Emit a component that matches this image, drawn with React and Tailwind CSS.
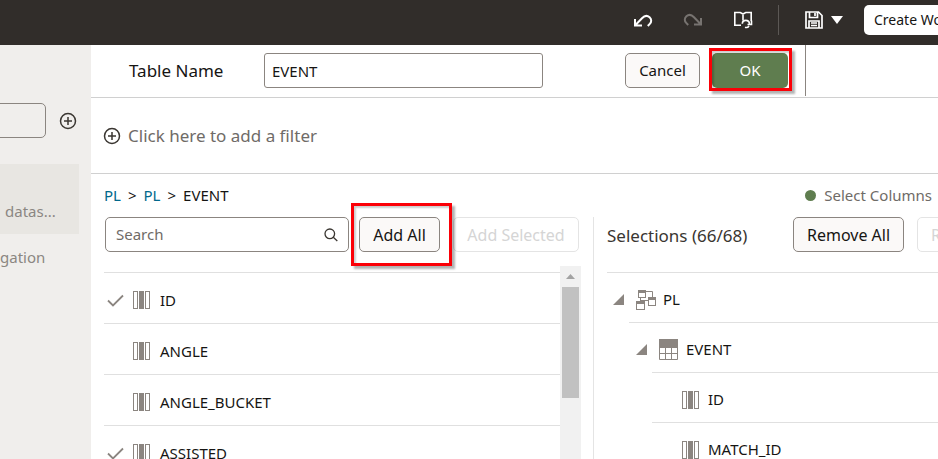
import React from "react";

function PlusCircle() {
  return (
    <svg width="18" height="18" viewBox="0 0 18 18" fill="none" stroke="#3a3631" strokeWidth="1.5" aria-hidden="true">
      <circle cx="9" cy="9" r="7.5" />
      <path d="M9 5v8M5 9h8" />
    </svg>
  );
}

function Undo() {
  return (
    <svg width="20" height="20" viewBox="0 0 20 20" fill="none" stroke="currentColor" strokeWidth="2" aria-hidden="true">
      <path d="M2 9v6.500h7M2.500 15L9 8.200c2.500-2.600 5.500-2.700 7.600-.9 2.200 2 2 4.700.2 6.600L14.800 16" />
    </svg>
  );
}

function Redo() {
  return (
    <svg width="20" height="20" viewBox="0 0 20 20" fill="none" stroke="currentColor" strokeWidth="2" aria-hidden="true">
      <path d="M18 8v6.500h-7M17.500 14L11 7.200C8.500 4.600 5.500 4.500 3.400 6.300c-2.200 2-2 4.700-.2 6.600L5.200 15" />
    </svg>
  );
}

function BookRefresh() {
  return (
    <svg width="20" height="20" viewBox="0 0 20 20" fill="none" stroke="white" strokeWidth="1.600" aria-hidden="true">
      <path d="M8 15.200H1.800V2.500h5.500L10 4l2.700-1.500h5.500V11M10 4v6.500" />
      <path d="M9.300 13.800c.2-4.500 6.700-4.600 7.200 0M18.500 10.500v4h-4M16 16c-1 1.500-2.500 1.800-4 1.300" />
    </svg>
  );
}

function Floppy() {
  return (
    <svg width="20" height="20" viewBox="0 0 20 20" fill="none" stroke="white" strokeWidth="1.700" aria-hidden="true">
      <path d="M2 2h12.500L18 5.500V18H2zM5.500 2v5.500h8V2M5 18v-7h10v7M7 13h6M7 15.500h6" />
      <path d="M11 3v3" />
    </svg>
  );
}

function Column() {
  return (
    <svg className="shrink-0" width="19" height="18" viewBox="0 0 19 18" fill="none" stroke="#8b8580" aria-hidden="true">
      <rect x="1.500" y=".5" width="4" height="17" />
      <rect x="7" y="0" width="5" height="18" fill="#8b8580" stroke="none" />
      <rect x="13.500" y=".5" width="4" height="17" />
    </svg>
  );
}

function Check() {
  return (
    <svg width="17" height="13" viewBox="0 0 17 13" fill="none" stroke="#8b8580" strokeWidth="1.800" aria-label="Added">
      <path d="M1 6.500l5 5L16 1.500" />
    </svg>
  );
}

function Schema() {
  return (
    <svg width="21" height="21" viewBox="0 0 21 21" fill="none" stroke="#8b8580" aria-hidden="true">
      <path d="M10 2.500h6.500v6M4.500 8v4M4.500 11.500h8" />
      <rect x="2.500" y="1.500" width="7" height="7" fill="white" />
      <rect x="2" y="1" width="8" height="3" fill="#8b8580" stroke="none" />
      <rect x="12.500" y="8.500" width="7" height="8" fill="white" />
      <rect x="12" y="8" width="8" height="3" fill="#8b8580" stroke="none" />
      <rect x=".5" y="12.500" width="8" height="8" fill="white" />
      <rect x="0" y="12" width="9" height="3" fill="#8b8580" stroke="none" />
    </svg>
  );
}

function TableIcon() {
  return (
    <svg width="19" height="21" viewBox="0 0 19 21" fill="none" stroke="#8b8580" aria-hidden="true">
      <rect x="0" y="0" width="19" height="9" fill="#8b8580" stroke="none" />
      <path d="M.5 8v12.500h18V8M6.500 8v12.500M12.500 8v12.500M0 14.500h19" />
    </svg>
  );
}

function Expander({ name }) {
  return (
    <button type="button" aria-label={"Collapse " + name} className="shrink-0">
      <svg width="12" height="11" viewBox="0 0 12 11" fill="#8b8580" aria-hidden="true">
        <path d="M11 0v11H0z" />
      </svg>
    </button>
  );
}

function Highlight({ className }) {
  return (
    <span
      aria-hidden="true"
      className={"pointer-events-none absolute border-3 border-[#fb0007] shadow-[3px_3px_2px_rgba(0,0,0,0.3),inset_2px_2px_2px_rgba(0,0,0,0.2)] " + className}
    />
  );
}

const columns = [
  { name: "ID", added: true },
  { name: "ANGLE", added: false },
  { name: "ANGLE_BUCKET", added: false },
  { name: "ASSISTED", added: true },
];

const outline = "h-[35px] shrink-0 rounded-[5px] border border-[#8b8580] bg-[#fbf9f8] text-[#161513]";
const disabled = "h-[35px] shrink-0 rounded-[5px] border border-[#e4e4e4] text-[#d5d5d5]";

export default function App() {
  return (
    <div className="flex h-screen flex-col overflow-hidden bg-white font-['Noto_Sans','Open_Sans',sans-serif] text-[15px] text-[#161513]">
      <header className="flex h-[45px] shrink-0 items-center justify-end bg-[#312d2a] pb-[5px] text-white">
        <div className="flex items-center gap-[30px]">
          <button type="button" aria-label="Undo"><Undo /></button>
          <button type="button" aria-label="Redo" className="text-[#777370]"><Redo /></button>
          <button type="button" aria-label="Refresh data"><BookRefresh /></button>
        </div>
        <span className="ml-[25px] h-[30px] w-px bg-[#5c5855]" />
        <button type="button" aria-label="Save" className="ml-[25px] flex items-center gap-[7px]">
          <Floppy />
          <svg width="12" height="8" viewBox="0 0 12 8" fill="white" aria-hidden="true"><path d="M0 0h12L6 8z" /></svg>
        </button>
        <button type="button" className="-mr-[70px] ml-[21px] h-[30px] w-36 shrink-0 rounded-[5px] bg-white pl-[10px] text-left text-sm whitespace-nowrap text-[#161513]">
          Create Workbook
        </button>
      </header>

      <div className="flex min-h-0 flex-1">
        <aside className="w-[91px] shrink-0 bg-[#f0eeec] pt-[58px] text-[#8b8782]">
          <div className="flex items-center gap-[13px]">
            <input aria-label="Search datasets" className="-ml-2 h-[35px] w-[54px] rounded-[5px] border border-[#8b8580] bg-transparent px-2" />
            <button type="button" aria-label="Add"><PlusCircle /></button>
          </div>
          <ul className="mt-[26px]">
            <li className="mr-3 flex h-[70px] items-end bg-[#e8e6e2] pb-3 pl-[5px]">datas...</li>
            <li className="flex h-[46px] items-center">gation</li>
          </ul>
        </aside>

        <main className="flex min-w-0 flex-1 flex-col">
          <div className="flex h-[53px] shrink-0 items-center border-b border-[#d0d0d0] pb-px pl-[38px]">
            <label htmlFor="table-name" className="w-[135px] shrink-0 text-[17px]">Table Name</label>
            <input id="table-name" defaultValue="EVENT" className="h-[35px] w-[279px] rounded-[3px] border border-[#8b8580] px-[7px]" />
            <div className="ml-[82px] flex h-full items-center gap-3 border-r border-[#8b8580] pr-[17px]">
              <button type="button" className={outline + " w-[75px]"}>Cancel</button>
              <div className="relative">
                <button type="button" className="block h-[35px] w-[76px] rounded-[5px] bg-[#5f7d4f] text-white">OK</button>
                <Highlight className="-top-[5px] -right-1 -bottom-[3px] -left-[3px]" />
              </div>
            </div>
          </div>

          <div className="flex h-[76px] shrink-0 items-center border-b border-[#d0d0d0] pl-3">
            <button type="button" className="flex items-center gap-[7px] text-[17px] text-[#6f6b67]">
              <PlusCircle />
              Click here to add a filter
            </button>
          </div>

          <div className="flex h-[43px] shrink-0 items-center justify-between pr-[6px] pl-[13px]">
            <nav aria-label="Breadcrumb" className="flex gap-[7px]">
              <a href="#root" className="text-[#00688c]">PL</a>
              <span>&gt;</span>
              <a href="#schema" className="text-[#00688c]">PL</a>
              <span>&gt;</span>
              <span>EVENT</span>
            </nav>
            <div className="flex items-center gap-2 text-[#6f6b67]">
              <span className="size-[11px] rounded-full bg-[#5f7d4f]" />
              Select Columns
            </div>
          </div>

          <div className="flex min-h-0 flex-1">
            <section className="flex w-[502px] shrink-0 flex-col pl-[13px]">
              <div className="flex h-[49px] shrink-0 pl-px text-base">
                <div className="flex h-[35px] w-[244px] items-center rounded-[5px] border border-[#8b8580] pr-[10px] pl-[10px]">
                  <input aria-label="Search" placeholder="Search" className="min-w-0 flex-1 text-[15px] outline-none placeholder:text-[#6f6b67]" />
                  <svg width="14" height="14" viewBox="0 0 14 14" fill="none" stroke="#3a3631" strokeWidth="1.300" aria-hidden="true">
                    <circle cx="5.800" cy="5.800" r="4.800" />
                    <path d="M9.300 9.300L13.300 13" />
                  </svg>
                </div>
                <div className="relative ml-[10px]">
                  <button type="button" className={outline + " w-[81px]"}>Add All</button>
                </div>
                <div className="relative ml-[13px]">
                  <button type="button" disabled className={disabled + " w-[126px]"}>Add Selected</button>
                  <Highlight className="-top-[14px] bottom-0 -left-[102px] w-[101px]" />
                </div>
              </div>
              <div className="flex min-h-0 flex-1">
                <ul className="min-w-0 flex-1 pt-[6px]">
                  {columns.map((c) => (
                    <li key={c.name} className="flex h-[51px] items-center border-t border-[#e0e0e0] pt-1">
                      <span className="w-7 shrink-0 pl-[3px]">{c.added && <Check />}</span>
                      <Column />
                      <span className="pl-[9px]">{c.name}</span>
                    </li>
                  ))}
                </ul>
                <div className="w-[21px] bg-[#f1f1f1] px-[2px]">
                  <button type="button" aria-label="Scroll up" className="flex h-[21px] w-full items-center justify-center">
                    <svg width="9" height="5" viewBox="0 0 9 5" fill="#a3a3a3" aria-hidden="true"><path d="M4.500 0L9 5H0z" /></svg>
                  </button>
                  <div className="h-[111px] bg-[#c1c1c1]" />
                </div>
                <div className="w-[12px]" />
              </div>
            </section>

            <section className="min-w-0 flex-1 overflow-hidden border-l border-[#e4e4e4] pl-[13px]">
              <div className="flex h-[55px] text-base">
                <h2 className="w-[186px] shrink-0 pt-[7px] text-[17px] leading-[24px] text-[#3a3631]">Selections (66/68)</h2>
                <button type="button" className={outline + " w-[111px]"}>Remove All</button>
                <button type="button" disabled className={disabled + " ml-[13px] w-[156px]"}>Remove Selected</button>
              </div>
              <ul>
                <li className="flex h-[50px] items-center border-t border-[#e0e0e0] pt-1 pl-[6px]">
                  <Expander name="PL" />
                  <span className="w-[38px] shrink-0 pl-[11px]"><Schema /></span>
                  PL
                </li>
                <li className="ml-[22px] flex h-[50px] items-center border-t border-[#e0e0e0] pt-1 pl-[7px]">
                  <Expander name="EVENT" />
                  <span className="w-[38px] shrink-0 pl-[11px]"><TableIcon /></span>
                  EVENT
                </li>
                <li className="ml-[45px] flex h-[50px] items-center gap-2 border-t border-[#e0e0e0] pt-1 pl-[29px]">
                  <Column />
                  ID
                </li>
                <li className="ml-[45px] flex h-[50px] items-center gap-2 border-t border-[#e0e0e0] pt-1 pl-[29px]">
                  <Column />
                  MATCH_ID
                </li>
              </ul>
            </section>
          </div>
        </main>
      </div>
    </div>
  );
}
